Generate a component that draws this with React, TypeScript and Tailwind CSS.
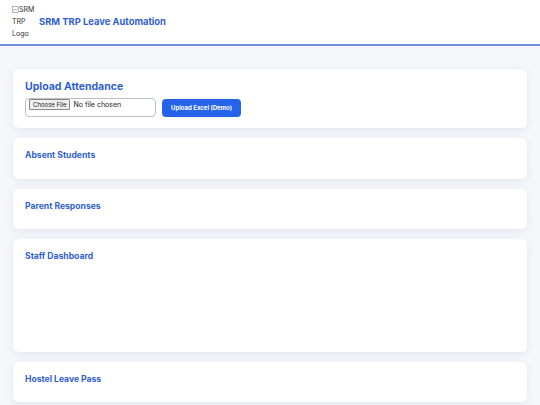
import React from "react";

const sections = [
  { title: "Absent Students", body: 0 },
  { title: "Parent Responses", body: 0 },
  { title: "Staff Dashboard", body: 72 },
  { title: "Hostel Leave Pass", body: 0 },
];

function Card({ title, big, children }: { title: string; big?: boolean; children?: React.ReactNode }) {
  return (
    <section
      className={
        big
          ? "rounded-[6px] bg-white px-3 pb-[11px] pt-3 shadow-[0_2px_8px_rgba(30,50,100,0.09)]"
          : "rounded-[6px] bg-white p-3 shadow-[0_2px_8px_rgba(30,50,100,0.09)]"
      }
    >
      <h2
        className={
          big
            ? "mb-[6px] text-[10.5px] font-bold leading-[11px] text-[#2f5fd0]"
            : "mb-[5.6px] text-[8.6px] font-bold leading-[11px] text-[#2f5fd0]"
        }
      >
        {title}
      </h2>
      {children}
    </section>
  );
}

function BrokenImg() {
  return (
    <svg width="7" height="7" viewBox="0 0 7 7" className="inline-block align-[-1px]">
      <rect x="0.5" y="0.5" width="6" height="6" fill="#fff" stroke="#999" strokeWidth="0.7" />
      <path d="M1.5 5l1.5-2 1.2 1.3L5.5 3" stroke="#6a9" strokeWidth="0.7" fill="none" />
    </svg>
  );
}

export default function App() {
  return (
    <div className="min-h-[405px] bg-[#f5f7fb] font-['Inter','Noto_Sans',sans-serif]">
      {/* Header */}
      <header className="flex h-[46px] items-center gap-[5px] border-b-2 border-[#6f8fe0] bg-white pl-3">
        <div className="w-[22px] text-[7px] leading-[12px] text-[#333]">
          <span className="block whitespace-nowrap">
            <BrokenImg />SRM
          </span>
          <span className="block">TRP</span>
          <span className="block">Logo</span>
        </div>
        <h1 className="text-[9.4px] font-bold text-[#2f5fd0]">SRM TRP Leave Automation</h1>
      </header>

      <main className="flex flex-col gap-[10px] px-[13px] pt-[23px]">
        <Card title="Upload Attendance" big>
          <div className="flex items-center gap-[6px]">
            <input
              type="file"
              className="h-[19px] w-[131px] rounded-[4px] border border-[#b9c0cc] px-[3px] text-[7px] text-[#222] file:mr-[3px] file:h-[11px] file:rounded-[1px] file:border file:border-[#888] file:bg-[#efefef] file:px-[3px] file:text-[6px]"
            />
            <button className="h-[18px] w-[79px] rounded-[4px] bg-[#2563eb] text-[6px] font-bold text-white">
              Upload Excel (Demo)
            </button>
          </div>
        </Card>
        {sections.map((s) => (
          <Card key={s.title} title={s.title}>
            {s.body > 0 && <div className="h-[72px]" />}
          </Card>
        ))}
      </main>
    </div>
  );
}
